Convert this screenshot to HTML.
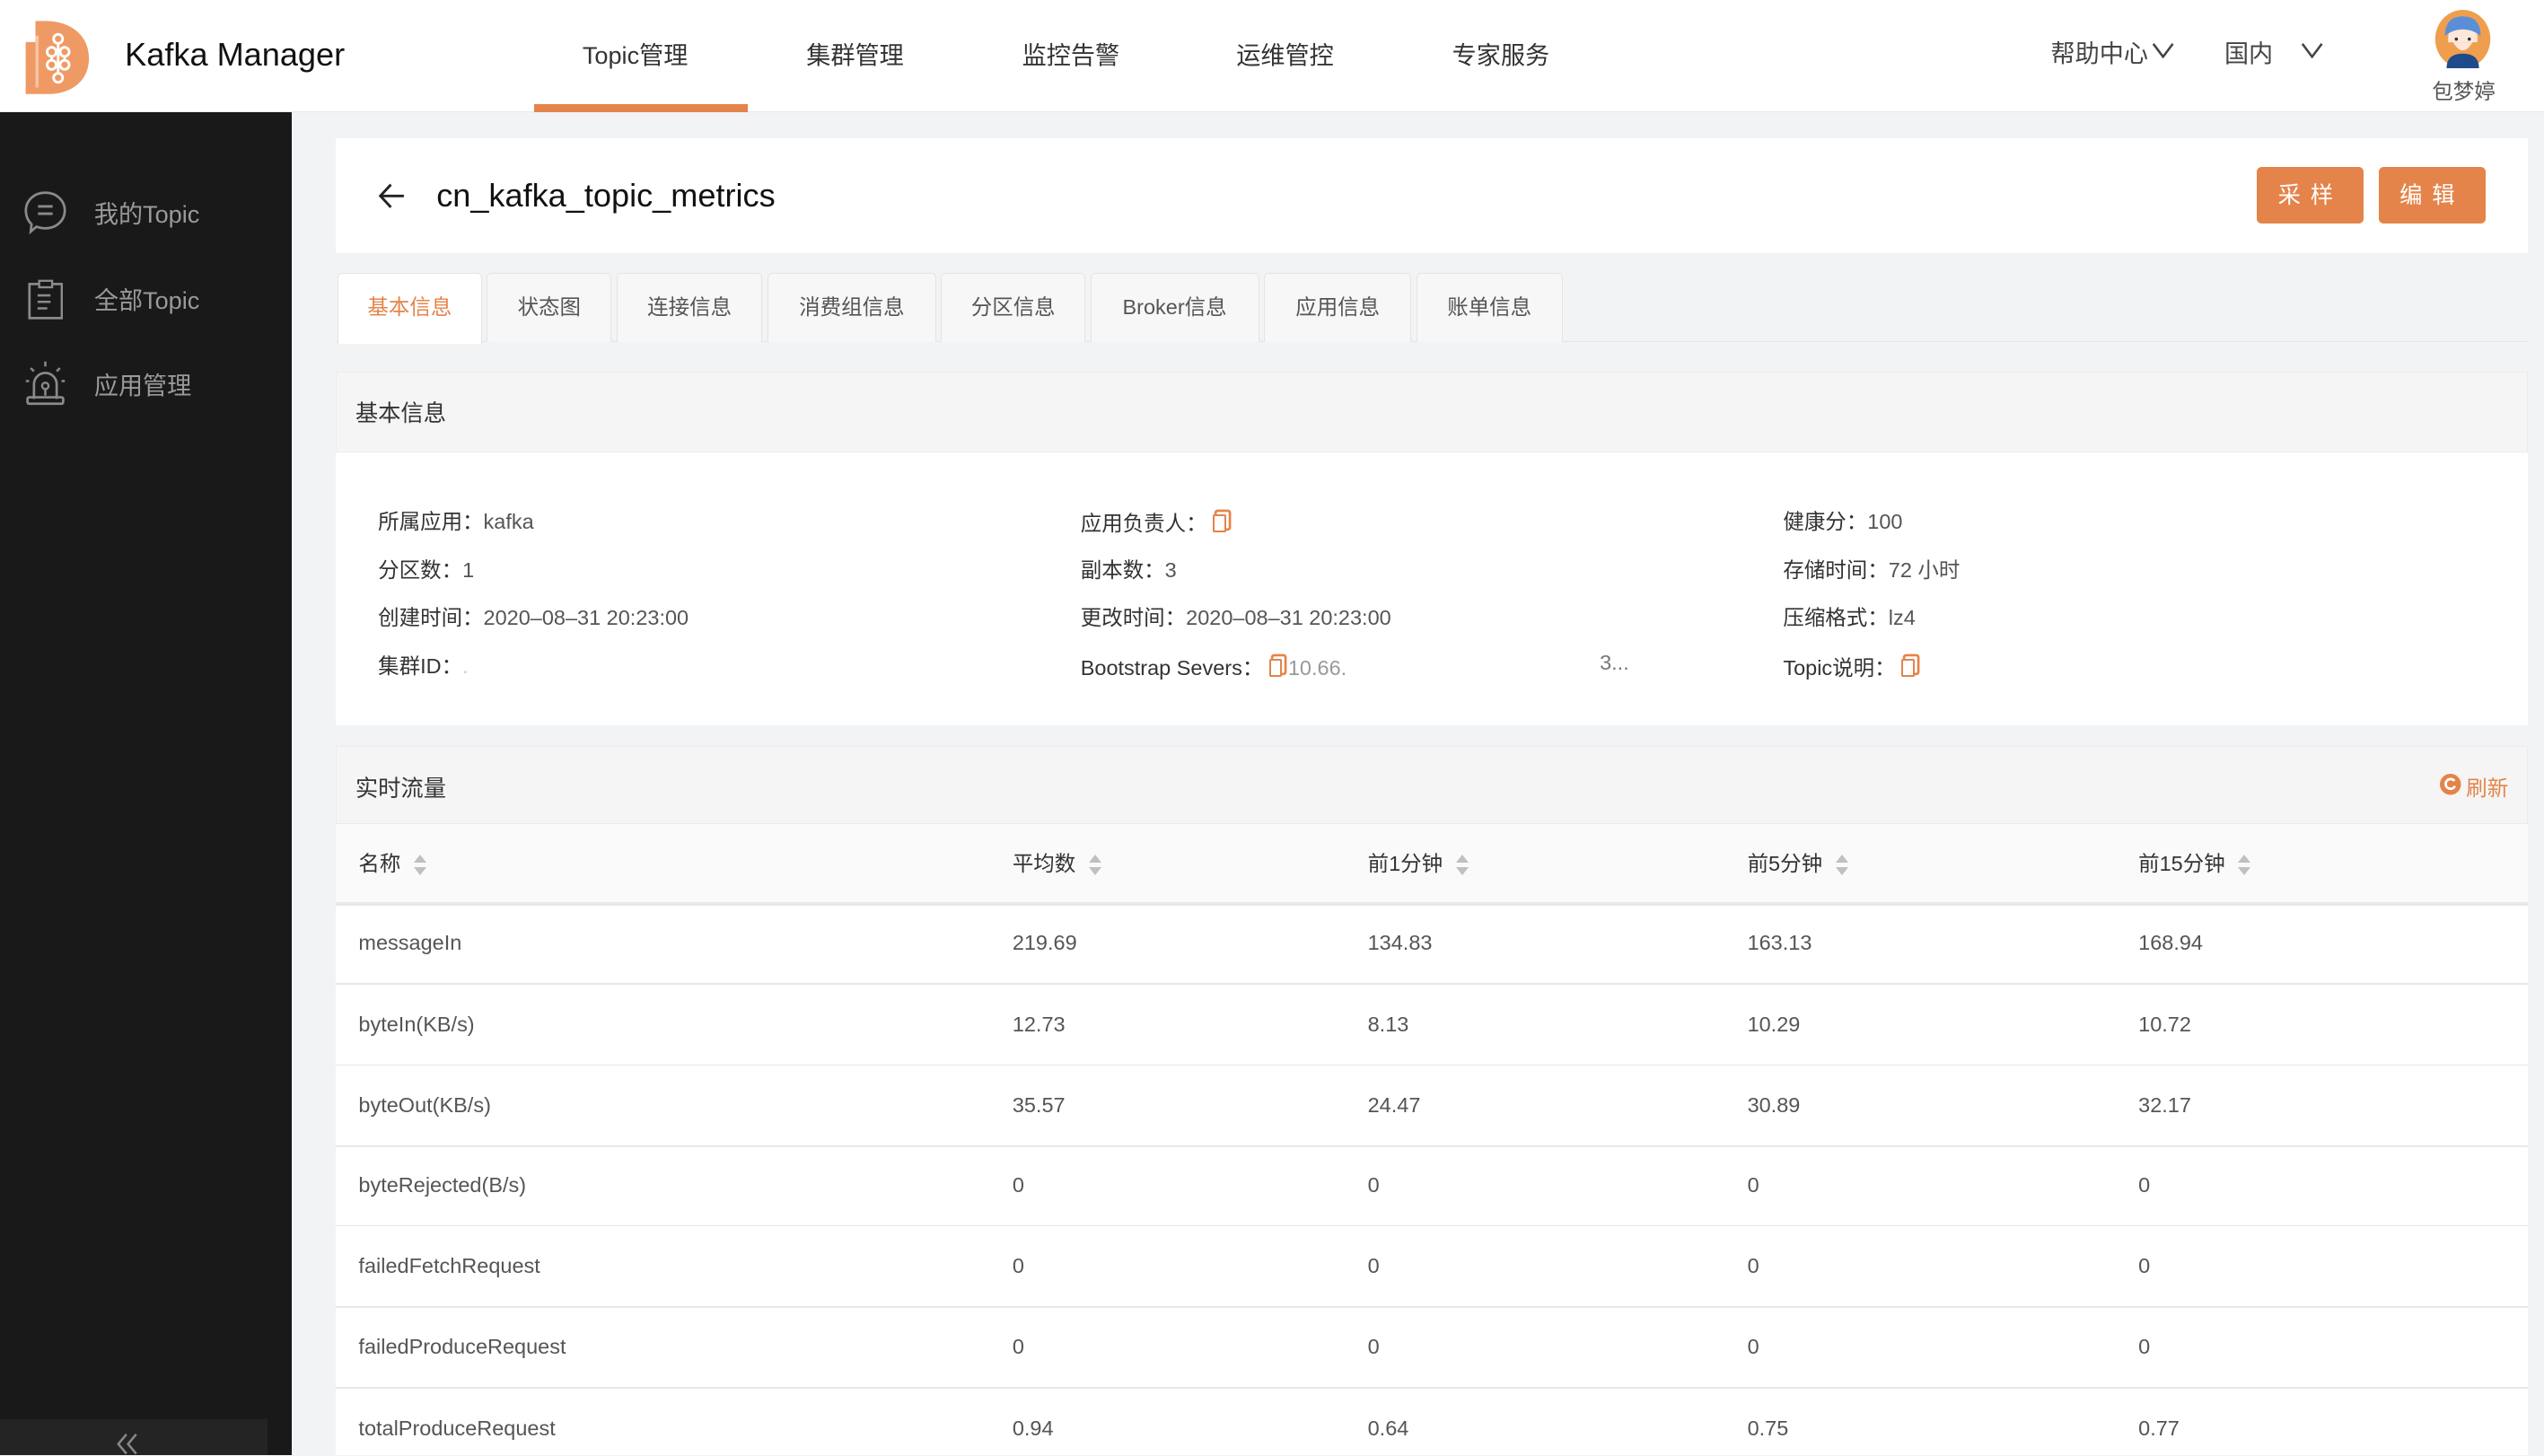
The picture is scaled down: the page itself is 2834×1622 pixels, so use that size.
<!DOCTYPE html>
<html><head><meta charset="utf-8"><style>
*{margin:0;padding:0;box-sizing:border-box}
html,body{width:2834px;height:1622px;overflow:hidden;background:#f2f3f5}
#r{zoom:1.80740;width:1568px;height:897px;position:relative;font-family:"Liberation Sans","Noto Sans CJK SC",sans-serif;color:#333;overflow:hidden}
.a{position:absolute;white-space:nowrap}
.hdr{left:0;top:0;width:1568px;height:69px;background:#fff;border-bottom:1px solid #e8e8e8}
.nav{top:22px;font-size:15px;color:#333}
.side{left:0;top:69px;width:180px;height:828px;background:#191919}
.si{left:58px;font-size:15px;color:#9a9a9a}
.card{background:#fff}
.btn{background:#e4844a;color:#fff;font-size:14px;border-radius:3px;text-align:center;line-height:36px;letter-spacing:6px;top:103px;width:66px;height:35px}
.tab{top:168px;height:43px;background:#f7f7f7;border:1px solid #e4e4e4;border-bottom:none;border-radius:3px 3px 0 0;font-size:13px;color:#555;text-align:center;line-height:42px}
.lb{font-size:13px;color:#333}
.v{color:#555}
.th{font-size:13px;color:#333;top:522px}
.td{font-size:13px;color:#555}
.line{left:207px;width:1351px;height:1px;background:#e8e8e8}
.sort{display:inline-block;vertical-align:middle;margin-left:8px;width:8px;height:14px;position:relative}
.sort:before{content:"";position:absolute;left:0;top:0;border:4px solid transparent;border-bottom:5px solid #c0c0c0;border-top:none}
.sort:after{content:"";position:absolute;left:0;top:8px;border:4px solid transparent;border-top:5px solid #c0c0c0;border-bottom:none}
.cp{display:inline-block;width:8px;height:11px;border:1.5px solid #e4844a;border-radius:1px;vertical-align:-1px;box-shadow:2px -2px 0 -0.5px #fff,2px -2px 0 1px #e4844a}
</style></head><body><div id="r">
<div class="a hdr"></div>
<svg class="a" style="left:14px;top:10px" width="42" height="49" viewBox="0 0 42 49"><path d="M2 16 H8 V3 H14 C30 3 41 12 41 26 C41 40 30 48 16 48 H2 Z" fill="#ef9a64"/><rect x="8" y="12" width="2" height="32" fill="#f6c3a3"/><g fill="none" stroke="#fff" stroke-width="1.6"><circle cx="22" cy="14" r="2.8"/><circle cx="18" cy="22" r="2.8"/><circle cx="26" cy="22" r="2.8"/><circle cx="18" cy="30" r="2.8"/><circle cx="26" cy="30" r="2.8"/><circle cx="22" cy="38" r="2.8"/><path d="M22 17 V35 M18 25 V27 M26 25 V27"/></g></svg>
<div class="a" style="left:77px;top:22px;font-size:20px;color:#111">Kafka Manager</div>
<div class="a nav" style="left:359px">Topic管理</div>
<div class="a nav" style="left:497px">集群管理</div>
<div class="a nav" style="left:630px">监控告警</div>
<div class="a nav" style="left:762px">运维管控</div>
<div class="a nav" style="left:895px">专家服务</div>
<div class="a" style="left:329px;top:64px;width:132px;height:5px;background:#e4844a"></div>
<div class="a nav" style="left:1264px;top:21px;color:#444">帮助中心</div>
<svg class="a" style="left:1326px;top:26px" width="14" height="10"><path d="M1 1 L7 9 L13 1" stroke="#444" stroke-width="1.4" fill="none"/></svg>
<div class="a nav" style="left:1371px;top:21px;color:#444">国内</div>
<svg class="a" style="left:1418px;top:26px" width="14" height="10"><path d="M1 1 L7 9 L13 1" stroke="#444" stroke-width="1.4" fill="none"/></svg>
<svg class="a" style="left:1500px;top:6px" width="36" height="36" viewBox="0 0 36 36"><ellipse cx="18" cy="18" rx="17" ry="18" fill="#ef9e4e"/><path d="M9 20 Q8 8 18 8 Q28 8 27 20 Z" fill="#fde7da"/><path d="M7 16 Q7 4 18 4 Q29 4 29 16 Q24 12 18 12 Q12 12 7 16Z" fill="#5a8fd8"/><path d="M8 36 Q8 27 18 27 Q28 27 28 36Z" fill="#1e4b8a"/><circle cx="14" cy="18" r="1" fill="#333"/><circle cx="22" cy="18" r="1" fill="#333"/><path d="M12 20 Q18 30 24 20" fill="#fde7da"/></svg>
<div class="a" style="left:1499px;top:46px;font-size:13px;color:#555">包梦婷</div>

<div class="a side"></div>
<svg class="a" style="left:15px;top:117px" width="26" height="28" viewBox="0 0 26 28"><path d="M13 2 C20 2 25 7 25 13 C25 19 20 24 13 24 C11 24 9 23.5 7.5 23 L4 26 L4.5 21.5 C2.5 19.5 1 16.5 1 13 C1 7 6 2 13 2Z" fill="none" stroke="#8a8a8a" stroke-width="1.5"/><path d="M8.5 10.5 H17.5 M8.5 15 H17.5" stroke="#8a8a8a" stroke-width="1.6"/></svg>
<div class="a si" style="top:120px">我的Topic</div>
<svg class="a" style="left:17px;top:172px" width="22" height="25" viewBox="0 0 22 25"><rect x="1" y="3" width="20" height="21" fill="none" stroke="#8a8a8a" stroke-width="1.5"/><rect x="7" y="1" width="8" height="4" fill="#191919" stroke="#8a8a8a" stroke-width="1.3"/><path d="M6 10 H14 M6 14 H14 M6 18 H12" stroke="#8a8a8a" stroke-width="1.4"/></svg>
<div class="a si" style="top:173px">全部Topic</div>
<svg class="a" style="left:15px;top:222px" width="26" height="28" viewBox="0 0 26 28"><path d="M6 24 V15 A7 7 0 0 1 20 15 V24" fill="none" stroke="#8a8a8a" stroke-width="1.5"/><rect x="2" y="23" width="22" height="4" rx="1" fill="none" stroke="#8a8a8a" stroke-width="1.5"/><circle cx="13" cy="16" r="2" fill="none" stroke="#8a8a8a" stroke-width="1.3"/><path d="M13 18 V22 M13 1 V4 M4 5 L6 7 M22 5 L20 7 M1 13 H3 M23 13 H25" stroke="#8a8a8a" stroke-width="1.4"/></svg>
<div class="a si" style="top:226px">应用管理</div>
<div class="a" style="left:0;top:875px;width:165px;height:22px;background:#242424"></div>
<svg class="a" style="left:72px;top:883px" width="14" height="14"><path d="M6 1 L1 7 L6 13 M12 1 L7 7 L12 13" stroke="#888" stroke-width="1.4" fill="none"/></svg>

<div class="a card" style="left:207px;top:85px;width:1351px;height:71px"></div>
<svg class="a" style="left:233px;top:112px" width="18" height="18"><path d="M16 9 H2 M8 2 L1.5 9 L8 16" stroke="#222" stroke-width="1.6" fill="none"/></svg>
<div class="a" style="left:269px;top:109px;font-size:20px;color:#111">cn_kafka_topic_metrics</div>
<div class="a btn" style="left:1391px">采样</div>
<div class="a btn" style="left:1466px">编辑</div>

<div class="a" style="left:207px;top:210px;width:1351px;height:1px;background:#e4e4e4"></div>
<div class="a tab" style="left:208px;width:89px;background:#fff;color:#e4844a;height:44px">基本信息</div>
<div class="a tab" style="left:300px;width:77px">状态图</div>
<div class="a tab" style="left:380px;width:90px">连接信息</div>
<div class="a tab" style="left:473px;width:104px">消费组信息</div>
<div class="a tab" style="left:580px;width:89px">分区信息</div>
<div class="a tab" style="left:672px;width:104px">Broker信息</div>
<div class="a tab" style="left:779px;width:91px">应用信息</div>
<div class="a tab" style="left:873px;width:90px">账单信息</div>

<div class="a" style="left:207px;top:229px;width:1351px;height:50px;background:#f5f5f5;border:1px solid #ebebeb"></div>
<div class="a" style="left:219px;top:244px;font-size:14px;color:#333">基本信息</div>
<div class="a card" style="left:207px;top:279px;width:1351px;height:168px"></div>
<div class="a lb" style="left:233px;top:311px">所属应用：<span class="v">kafka</span></div>
<div class="a lb" style="left:233px;top:341px">分区数：<span class="v">1</span></div>
<div class="a lb" style="left:233px;top:370px">创建时间：<span class="v">2020–08–31 20:23:00</span></div>
<div class="a lb" style="left:233px;top:400px">集群ID：<span class="v" style="color:#ccc">.</span></div>
<div class="a lb" style="left:666px;top:312px">应用负责人： <span class="cp"></span></div>
<div class="a lb" style="left:666px;top:341px">副本数：<span class="v">3</span></div>
<div class="a lb" style="left:666px;top:370px">更改时间：<span class="v">2020–08–31 20:23:00</span></div>
<div class="a lb" style="left:666px;top:401px">Bootstrap Severs： <span class="cp"></span> <span class="v" style="color:#999">10.66.</span></div>
<div class="a lb" style="left:986px;top:401px;color:#777">3...</div>
<div class="a lb" style="left:1099px;top:311px">健康分：<span class="v">100</span></div>
<div class="a lb" style="left:1099px;top:341px">存储时间：<span class="v">72 小时</span></div>
<div class="a lb" style="left:1099px;top:370px">压缩格式：<span class="v">lz4</span></div>
<div class="a lb" style="left:1099px;top:401px">Topic说明： <span class="cp"></span></div>

<div class="a" style="left:207px;top:460px;width:1351px;height:48px;background:#f5f5f5;border:1px solid #ebebeb"></div>
<div class="a" style="left:219px;top:475px;font-size:14px;color:#333">实时流量</div>
<svg class="a" style="left:1504px;top:477px" width="13" height="13"><circle cx="6.5" cy="6.5" r="6.5" fill="#e4844a"/><path d="M9 4.5 A3 3 0 1 0 9.3 7.5" stroke="#fff" stroke-width="1.5" fill="none"/></svg>
<div class="a" style="left:1520px;top:475px;font-size:13px;color:#e4844a">刷新</div>
<div class="a" style="left:207px;top:508px;width:1351px;height:48px;background:#fafafa"></div>
<div class="a card" style="left:207px;top:557px;width:1351px;height:340px"></div>
<div class="a th" style="left:221px">名称<span class="sort"></span></div>
<div class="a th" style="left:624px">平均数<span class="sort"></span></div>
<div class="a th" style="left:843px">前1分钟<span class="sort"></span></div>
<div class="a th" style="left:1077px">前5分钟<span class="sort"></span></div>
<div class="a th" style="left:1318px">前15分钟<span class="sort"></span></div>
<div class="a line" style="top:556px;height:2px"></div>
<div class="a line" style="top:606px"></div>
<div class="a line" style="top:656px"></div>
<div class="a line" style="top:706px"></div>
<div class="a line" style="top:755px"></div>
<div class="a line" style="top:805px"></div>
<div class="a line" style="top:855px"></div>

<div class="a td" style="left:221px;top:574px">messageIn</div><div class="a td" style="left:624px;top:574px">219.69</div><div class="a td" style="left:843px;top:574px">134.83</div><div class="a td" style="left:1077px;top:574px">163.13</div><div class="a td" style="left:1318px;top:574px">168.94</div>
<div class="a td" style="left:221px;top:624px">byteIn(KB/s)</div><div class="a td" style="left:624px;top:624px">12.73</div><div class="a td" style="left:843px;top:624px">8.13</div><div class="a td" style="left:1077px;top:624px">10.29</div><div class="a td" style="left:1318px;top:624px">10.72</div>
<div class="a td" style="left:221px;top:674px">byteOut(KB/s)</div><div class="a td" style="left:624px;top:674px">35.57</div><div class="a td" style="left:843px;top:674px">24.47</div><div class="a td" style="left:1077px;top:674px">30.89</div><div class="a td" style="left:1318px;top:674px">32.17</div>
<div class="a td" style="left:221px;top:723px">byteRejected(B/s)</div><div class="a td" style="left:624px;top:723px">0</div><div class="a td" style="left:843px;top:723px">0</div><div class="a td" style="left:1077px;top:723px">0</div><div class="a td" style="left:1318px;top:723px">0</div>
<div class="a td" style="left:221px;top:773px">failedFetchRequest</div><div class="a td" style="left:624px;top:773px">0</div><div class="a td" style="left:843px;top:773px">0</div><div class="a td" style="left:1077px;top:773px">0</div><div class="a td" style="left:1318px;top:773px">0</div>
<div class="a td" style="left:221px;top:823px">failedProduceRequest</div><div class="a td" style="left:624px;top:823px">0</div><div class="a td" style="left:843px;top:823px">0</div><div class="a td" style="left:1077px;top:823px">0</div><div class="a td" style="left:1318px;top:823px">0</div>
<div class="a td" style="left:221px;top:873px">totalProduceRequest</div><div class="a td" style="left:624px;top:873px">0.94</div><div class="a td" style="left:843px;top:873px">0.64</div><div class="a td" style="left:1077px;top:873px">0.75</div><div class="a td" style="left:1318px;top:873px">0.77</div>
</div></body></html>
